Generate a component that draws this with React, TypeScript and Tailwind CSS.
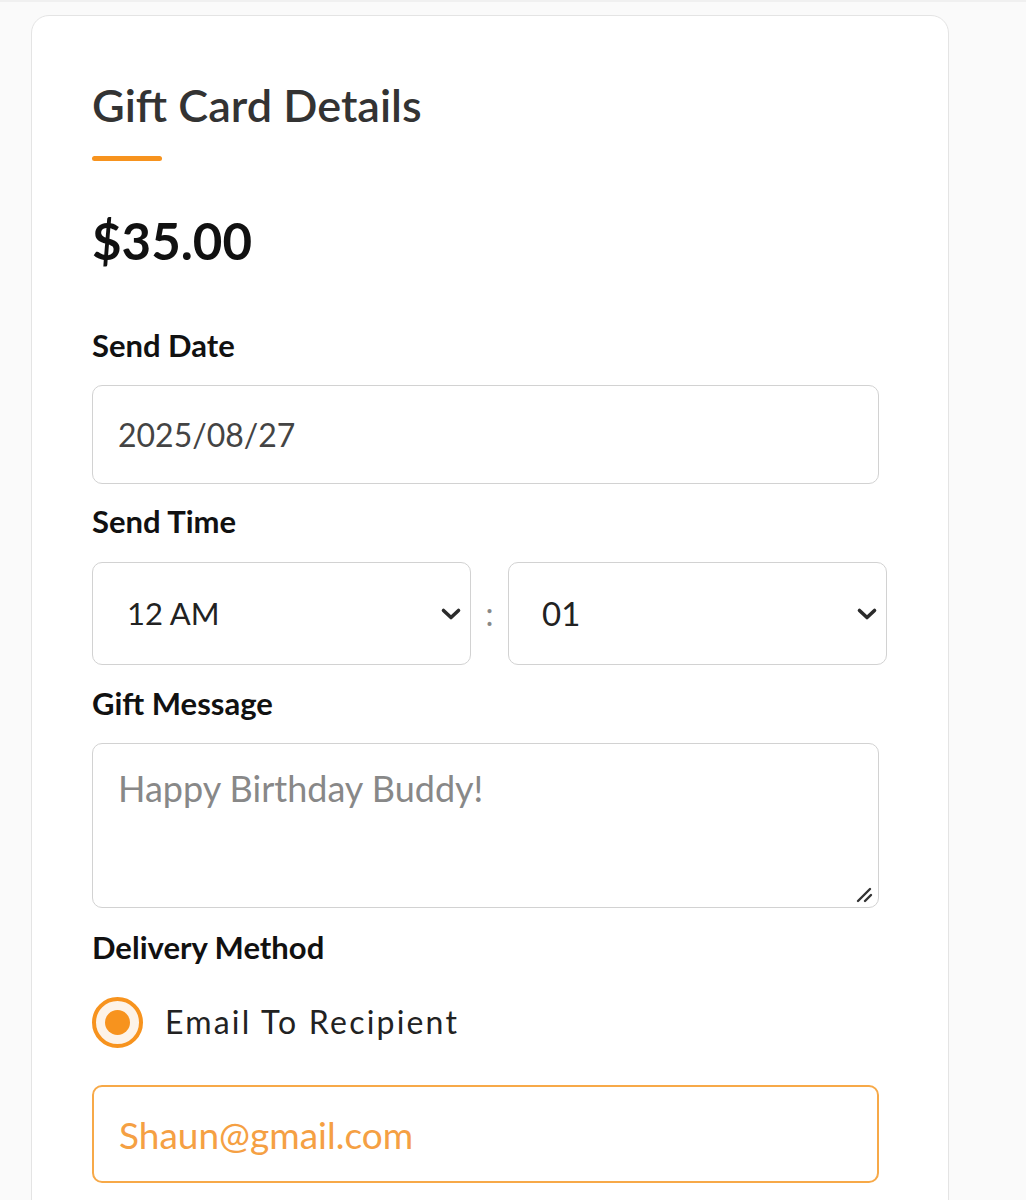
import React from "react";

const font = { fontFamily: "Lato, 'Noto Sans', sans-serif" };

function Chevron() {
  return (
    <svg width="22" height="14" viewBox="0 0 22 14" className="pointer-events-none absolute right-[9px] top-1/2 -translate-y-1/2">
      <path d="M3.5 3.5 L11 10.5 L18.5 3.5" fill="none" stroke="#2b2b2b" strokeWidth="3.6" strokeLinecap="round" strokeLinejoin="round" />
    </svg>
  );
}

export default function App() {
  return (
    <div className="min-h-screen bg-[#fafafa] pt-[13px] pl-[31px] border-t-2 border-[#f0f0f0]" style={font}>
      <div className="w-[918px] rounded-[18px] border border-[#e4e4e4] bg-white pl-[60px] pt-[63px] pb-[60px]">
        <h1 className="text-[45px] leading-[52px] font-semibold text-[#333]">Gift Card Details</h1>
        <div className="mt-[25px] h-[5px] w-[70px] rounded-full bg-[#f7931e]" />
        <div className="mt-[48px] text-[51px] leading-[64px] font-bold text-[#111]">$35.00</div>

        <div className="mt-[54px] text-[31px] leading-[36px] font-bold text-[#111]">Send Date</div>
        <input
          readOnly
          value="2025/08/27"
          className="mt-[22px] block h-[99px] w-[787px] rounded-[10px] border border-[#d2d2d2] bg-white px-[25px] text-[32px] text-[#444] outline-none"
        />

        <div className="mt-[19px] text-[31px] leading-[36px] font-bold text-[#111]">Send Time</div>
        <div className="mt-[23px] flex w-[795px] items-center">
          <div className="relative w-[379px]">
            <select
              defaultValue="12"
              className="block h-[103px] w-full appearance-none rounded-[10px] border border-[#d2d2d2] bg-white pl-[34px] text-[31px] text-[#222] outline-none"
            >
              <option value="12">12 AM</option>
            </select>
            <Chevron />
          </div>
          <div className="flex w-[37px] justify-center text-[32px] text-[#888]">:</div>
          <div className="relative w-[379px]">
            <select
              defaultValue="01"
              className="block h-[103px] w-full appearance-none rounded-[10px] border border-[#d2d2d2] bg-white pl-[33px] text-[33px] text-[#222] outline-none"
            >
              <option value="01">01</option>
            </select>
            <Chevron />
          </div>
        </div>

        <div className="mt-[20px] text-[31px] leading-[36px] font-bold text-[#111]">Gift Message</div>
        <div className="relative mt-[22px] w-[787px]">
          <textarea
            placeholder="Happy Birthday Buddy!"
            className="block h-[165px] w-full resize-none rounded-[10px] border border-[#d2d2d2] bg-white px-[25px] pt-[22px] text-[36px] leading-[44px] text-[#444] outline-none placeholder:text-[#888]"
          />
          <svg width="20" height="20" viewBox="0 0 20 20" className="pointer-events-none absolute bottom-[4px] right-[4px]">
            <path d="M3 17 L15 5" stroke="#333" strokeWidth="2.4" strokeLinecap="round" />
            <path d="M10 17 L16 11" stroke="#333" strokeWidth="2.4" strokeLinecap="round" />
          </svg>
        </div>

        <div className="mt-[21px] text-[31px] leading-[36px] font-bold text-[#111]">Delivery Method</div>
        <label className="mt-[31px] flex h-[52px] items-center">
          <span className="flex h-[51px] w-[51px] items-center justify-center rounded-full border-[4px] border-[#f7931e] bg-[#fdf3e8]">
            <span className="h-[25px] w-[25px] rounded-full bg-[#f7931e]" />
          </span>
          <span className="ml-[22px] text-[32px] tracking-[2.2px] text-[#222]">Email To Recipient</span>
        </label>

        <input
          readOnly
          value="Shaun@gmail.com"
          className="mt-[37px] block h-[98px] w-[787px] rounded-[10px] border-2 border-[#f7a948] bg-white px-[25px] text-[37px] text-[#f5a043] outline-none"
        />
      </div>
    </div>
  );
}
